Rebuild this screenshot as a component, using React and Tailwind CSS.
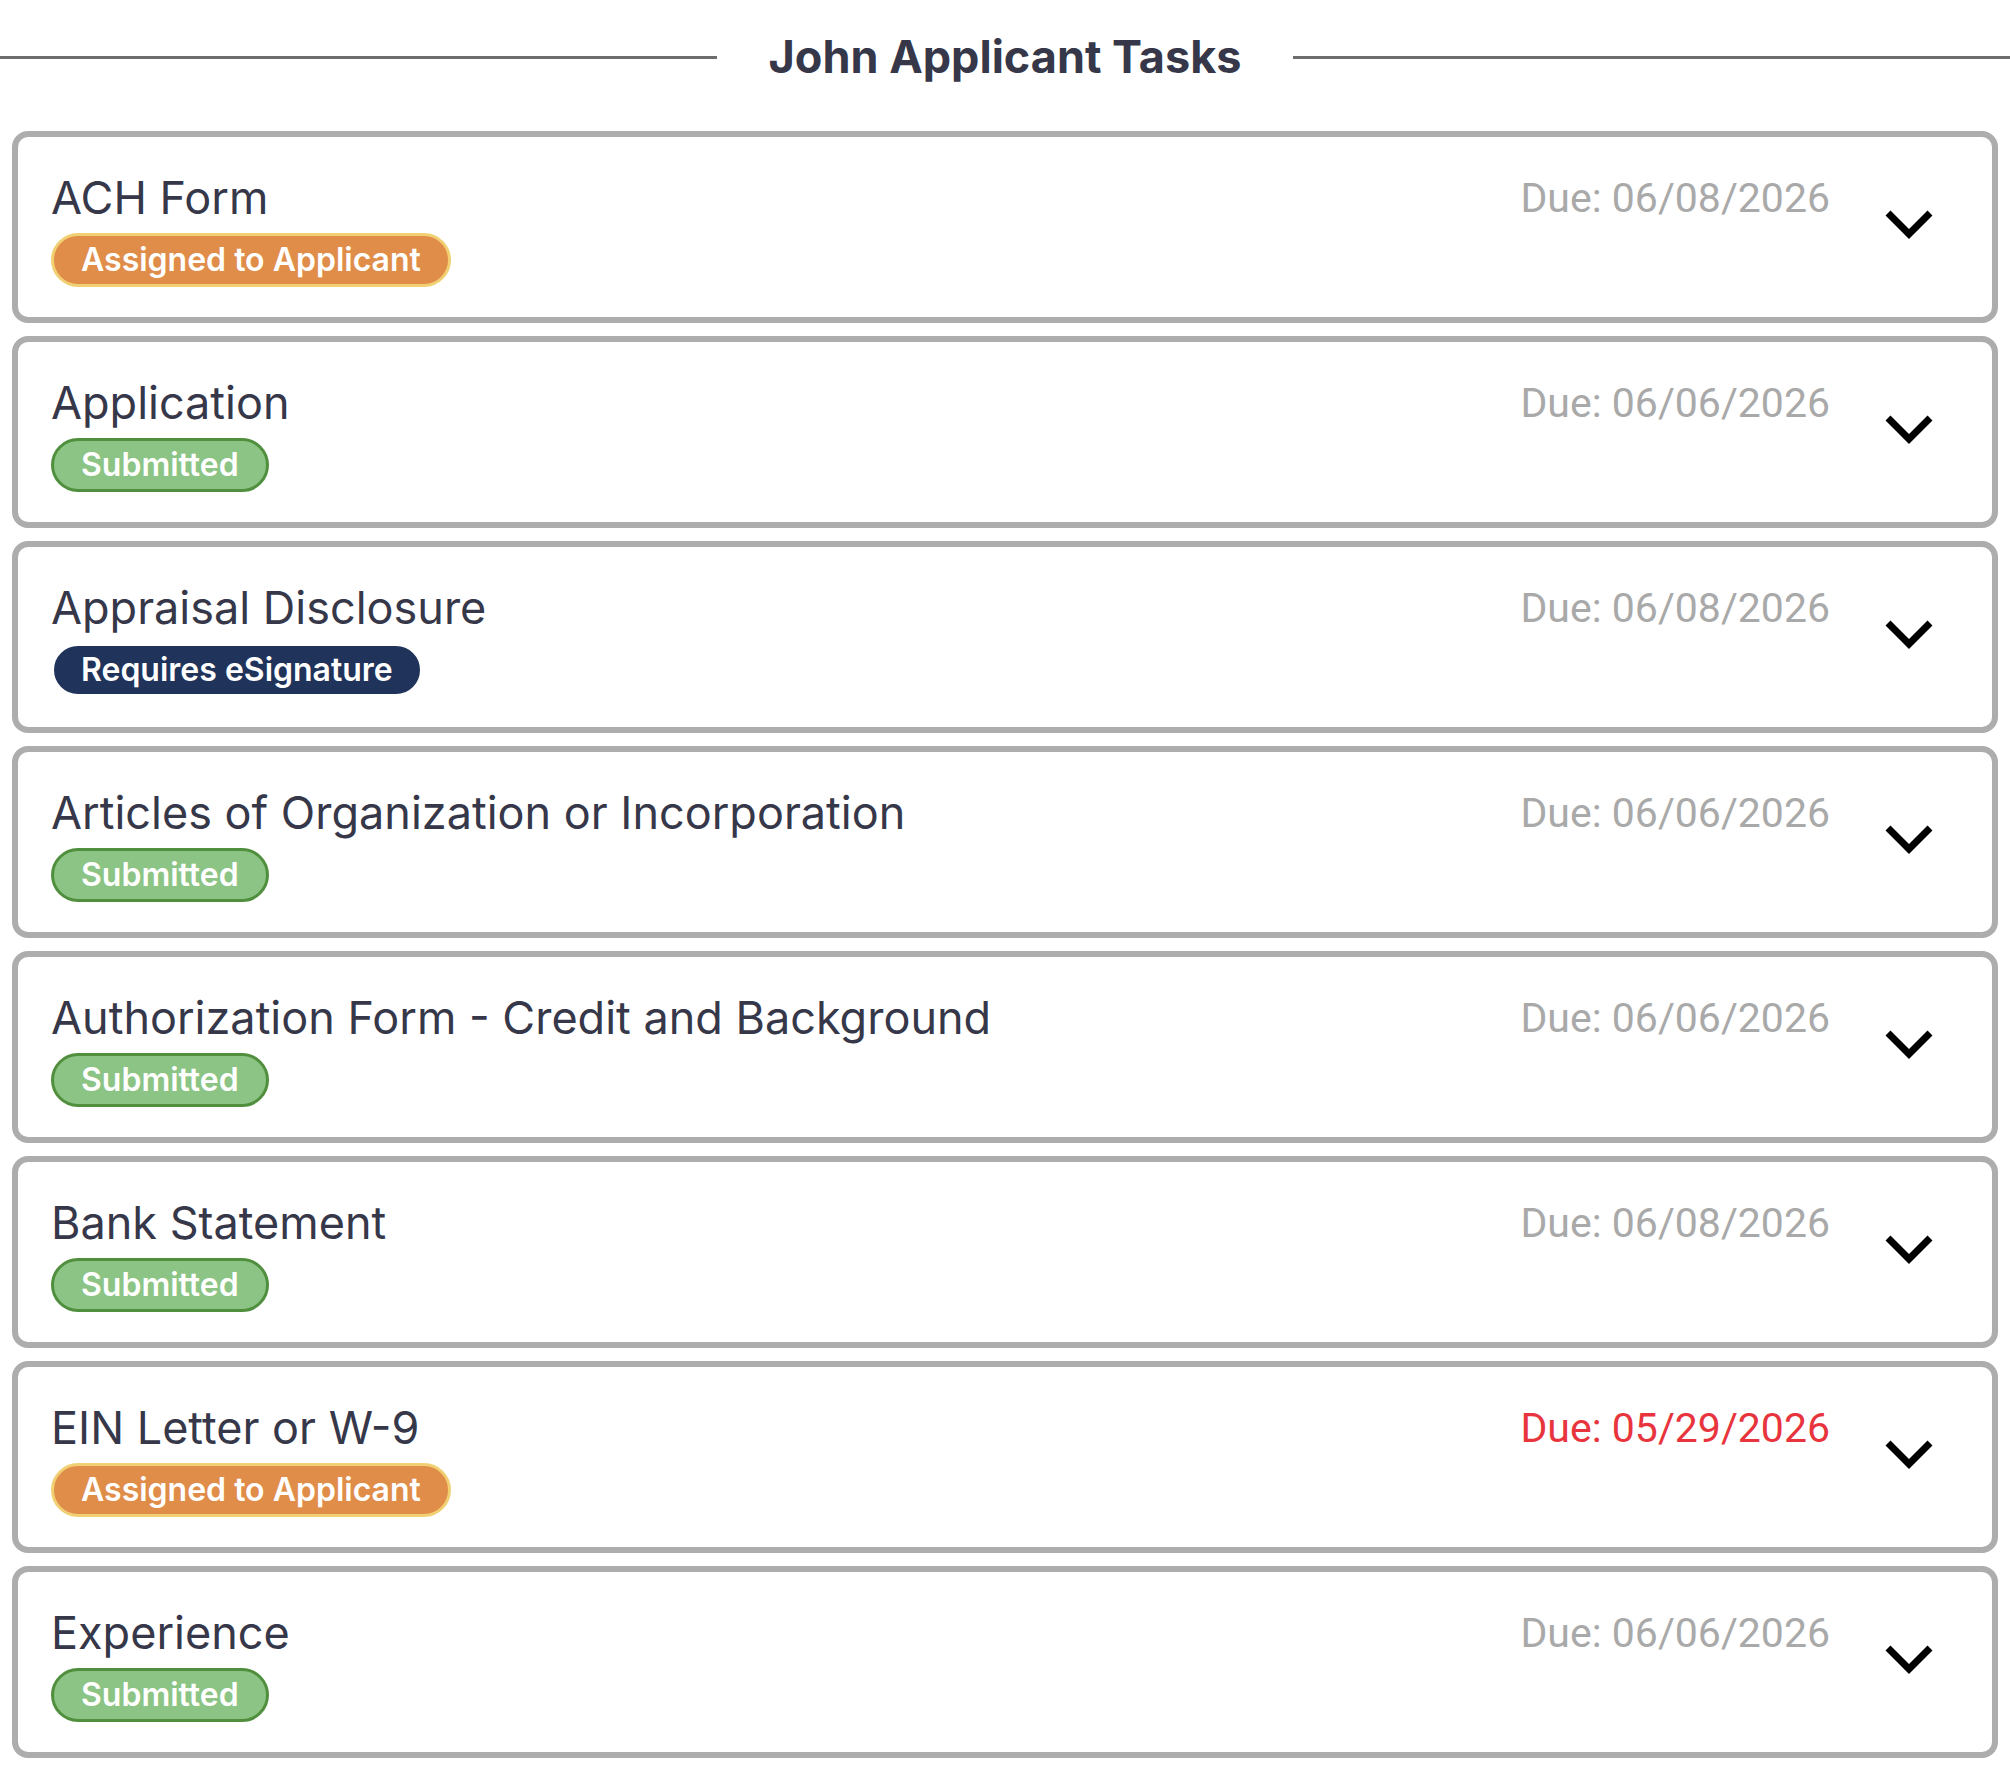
const tasks = [
  { name: 'ACH Form', status: 'assigned', due: '06/08/2026' },
  { name: 'Application', status: 'submitted', due: '06/06/2026' },
  { name: 'Appraisal Disclosure', status: 'esign', due: '06/08/2026' },
  { name: 'Articles of Organization or Incorporation', status: 'submitted', due: '06/06/2026' },
  { name: 'Authorization Form - Credit and Background', status: 'submitted', due: '06/06/2026' },
  { name: 'Bank Statement', status: 'submitted', due: '06/08/2026' },
  { name: 'EIN Letter or W-9', status: 'assigned', due: '05/29/2026', overdue: true },
  { name: 'Experience', status: 'submitted', due: '06/06/2026' },
];

const badges = {
  assigned: { label: 'Assigned to Applicant', cls: 'bg-[#e08d4a] border-[#f1d073]' },
  submitted: { label: 'Submitted', cls: 'bg-[#8bc484] border-[#4f8f3d]' },
  esign: { label: 'Requires eSignature', cls: 'bg-[#20335a] border-white' },
};

function StatusBadge({ status }) {
  const b = badges[status];
  return (
    <span
      className={`inline-flex h-[54px] items-center rounded-full border-[3px] px-[27px] text-[32px] font-semibold leading-none text-white ${b.cls}`}
    >
      {b.label}
    </span>
  );
}

function Chevron() {
  return (
    <svg width="50" height="32" viewBox="0 0 50 32" className="mt-[38px] shrink-0">
      <polyline points="4,4 25,25 46,4" fill="none" stroke="#000" strokeWidth="7" strokeLinejoin="miter" />
    </svg>
  );
}

function TaskCard({ task }) {
  return (
    <div className="flex h-[192px] items-start rounded-[16px] border-[6px] border-[#adadad] bg-white pl-[33px] pr-[58px] pt-[34px]">
      <div className="flex min-w-0 flex-1 flex-col items-start">
        <div className="text-[45px] leading-[53px] text-[#36384a]">{task.name}</div>
        <div className="mt-[9px]">
          <StatusBadge status={task.status} />
        </div>
      </div>
      <div
        className={`mt-[3px] text-[41px] leading-[48px] ${task.overdue ? 'text-[#e8343c]' : 'text-[#a9a9a9]'}`}
        style={{ fontFamily: 'Roboto, "Liberation Sans", sans-serif' }}
      >
        Due: {task.due}
      </div>
      <div className="ml-[54px]">
        <Chevron />
      </div>
    </div>
  );
}

export default function App() {
  return (
    <div className="min-h-screen bg-white pt-[30px]" style={{ fontFamily: 'Inter, "Noto Sans", sans-serif' }}>
      {/* heading with rules either side */}
      <div className="flex items-center gap-[52px]">
        <div className="h-[3px] flex-1 bg-[#6d6d6d]" />
        <h1 className="text-[45px] font-bold leading-[54px] text-[#36384a]">John Applicant Tasks</h1>
        <div className="h-[3px] flex-1 bg-[#6d6d6d]" />
      </div>

      <div className="mx-[12px] mt-[47px] flex flex-col gap-[13px]">
        {tasks.map((t) => (
          <TaskCard key={t.name} task={t} />
        ))}
      </div>
    </div>
  );
}
